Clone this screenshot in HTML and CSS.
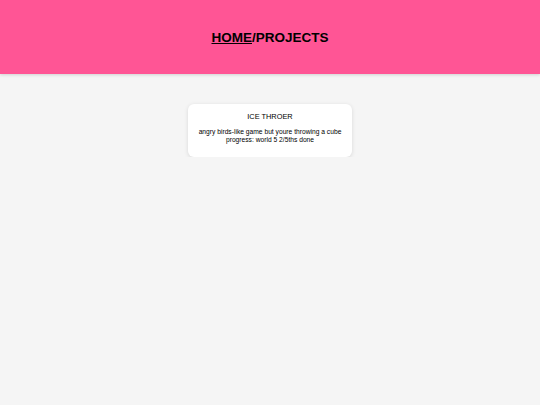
FILE: index.html
```html
<!DOCTYPE html>
<html>
<head>
<meta charset="utf-8">
<link rel="stylesheet" href="styles.css">
</head>
<body>
<header class="top">
  <h1 class="crumbs"><a class="home" href="#">HOME</a>/PROJECTS</h1>
</header>
<main class="list">
  <div class="card">
    <div class="title">ICE THROER</div>
    <p class="desc">angry birds-like game but youre throwing a cube<br>progress: world 5 2/5ths done</p>
  </div>
</main>
</body>
</html>
```
FILE: styles.css
```css
html, body {
  margin: 0;
  padding: 0;
  background: #f5f5f5;
  font-family: "Liberation Sans", Arial, sans-serif;
}
.top {
  height: 74px;
  background: #ff5595;
  display: flex;
  align-items: center;
  justify-content: center;
  box-shadow: 0 1px 3px rgba(0,0,0,0.15);
}
.crumbs {
  margin: 0;
  font-size: 13.5px;
  font-weight: bold;
  color: #000;
}
.home {
  color: #000;
  text-decoration: underline;
}
.list {
  display: flex;
  justify-content: center;
  padding-top: 30px;
}
.card {
  background: #fff;
  border-radius: 6px;
  box-shadow: 0 1px 4px rgba(0,0,0,0.12);
  padding: 8px 11px 13px;
  text-align: center;
  color: #000;
}
.title {
  font-size: 7.4px;
  line-height: 10px;
}
.desc {
  margin: 6px 0 0;
  font-size: 6.7px;
  line-height: 8px;
}
```
